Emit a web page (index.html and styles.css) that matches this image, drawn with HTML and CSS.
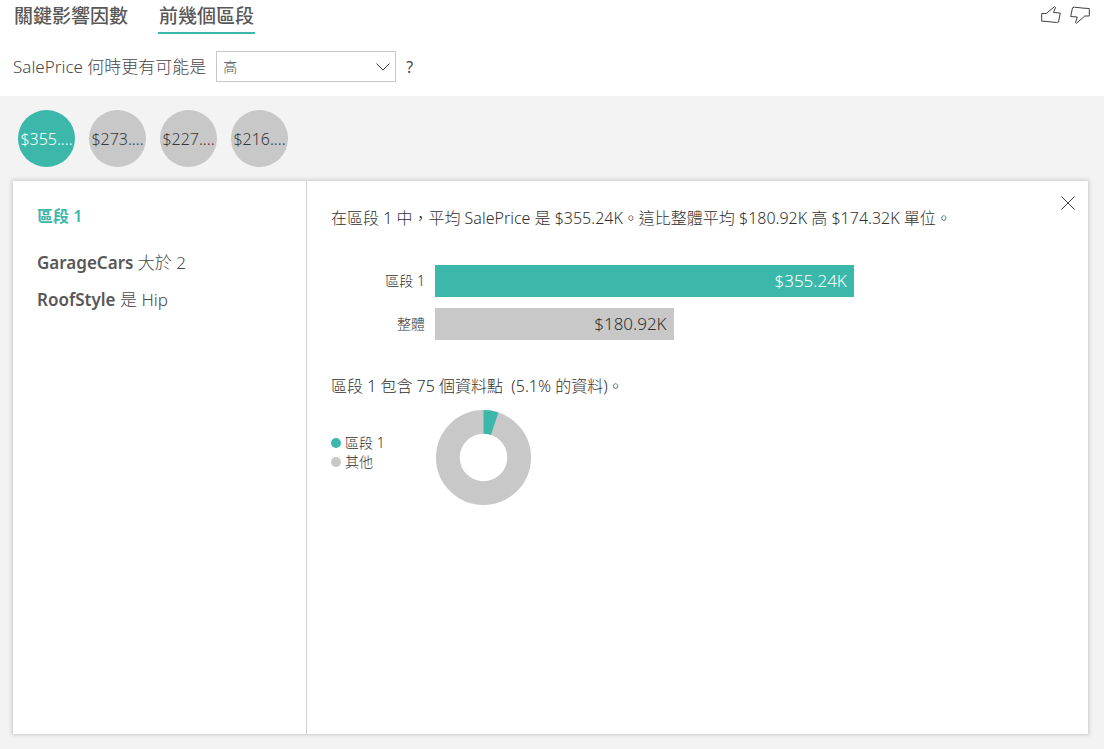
FILE: index.html
```html
<!DOCTYPE html>
<html lang="zh-Hant">
<head>
<meta charset="utf-8">
<meta name="viewport" content="width=device-width, initial-scale=1">
<title>前幾個區段</title>
<link rel="stylesheet" href="styles.css">
</head>
<body>
<div class="visual">
  <header class="header">
    <nav class="tabs">
      <button class="tab" type="button">關鍵影響因數</button>
      <button class="tab tab-active" type="button">前幾個區段</button>
    </nav>
    <div class="feedback">
      <button class="icon-button" type="button" aria-label="Like">
        <svg width="20" height="18" viewBox="0 0 20 18"><path d="M.7 7.5H5.200L13.500.7L14.500 1.500L12.500 6.500L19.300 7L17.500 16L15.500 16.500L6 15.500L.7 15.200Z"/></svg>
      </button>
      <button class="icon-button" type="button" aria-label="Dislike">
        <svg width="20" height="18" viewBox="0 0 20 18"><path d="M19.300 10H14.800L6.500 17.200L5.500 16.500L7.300 11L.7 10.500L2.500 1.800L4.500 1.200L14 2.200L19.300 2.500Z"/></svg>
      </button>
    </div>
  </header>
  <div class="question">
    <label for="level">SalePrice 何時更有可能是</label>
    <div class="select-box">
      <select id="level" class="select"><option>高</option></select>
      <svg class="chevron" width="14" height="8" viewBox="0 0 14 8"><path d="M.5.5L7 7L13.500.5"/></svg>
    </div>
    <span class="question-mark">?</span>
  </div>
  <main class="content">
    <div class="bubbles">
      <button class="bubble bubble-active" type="button">$355....</button>
      <button class="bubble" type="button">$273....</button>
      <button class="bubble" type="button">$227....</button>
      <button class="bubble" type="button">$216....</button>
    </div>
    <section class="card">
      <aside class="segment">
        <h2 class="segment-title">區段 1</h2>
        <p class="rule"><b>GarageCars</b> 大於 2</p>
        <p class="rule"><b>RoofStyle</b> 是 Hip</p>
      </aside>
      <div class="details">
        <div class="details-head">
          <p class="sentence">在區段 1 中，平均 SalePrice 是 $355.24K。這比整體平均 $180.92K 高 $174.32K 單位。</p>
          <button class="icon-button" type="button" aria-label="Close">
            <svg width="14" height="14" viewBox="0 0 14 14"><path d="M.5.5L13.500 13.500M13.500.5L.5 13.500"/></svg>
          </button>
        </div>
        <div class="bars">
          <span class="bar-label">區段 1</span>
          <div><div class="bar bar-segment" style="width:66.7%">$355.24K</div></div>
          <span class="bar-label">整體</span>
          <div><div class="bar" style="width:38%">$180.92K</div></div>
        </div>
        <p class="sentence">區段 1 包含 75 個資料點&nbsp; (5.1% 的資料)。</p>
        <div class="share">
          <ul class="legend">
            <li class="legend-item legend-segment">區段 1</li>
            <li class="legend-item">其他</li>
          </ul>
          <svg class="donut" width="95" height="95" viewBox="0 0 96 96">
            <circle class="donut-other" cx="48" cy="48" r="36"/>
            <circle class="donut-segment" cx="48" cy="48" r="36" pathLength="100" stroke-dasharray="5.1 94.9" transform="rotate(-90 48 48)"/>
          </svg>
        </div>
      </div>
    </section>
  </main>
</div>
</body>
</html>
```
FILE: styles.css
```css
* {
  box-sizing: border-box;
}

body {
  margin: 0;
  background: #fff;
  color: #484848;
  font: 300 16px/24px "Noto Sans", "Noto Sans CJK TC", sans-serif;
}

button,
select {
  font: inherit;
  color: inherit;
}

button {
  padding: 0;
  border: 0;
  background: none;
  cursor: pointer;
}

p,
h2,
ul {
  margin: 0;
  padding: 0;
}

.visual {
  display: flex;
  flex-direction: column;
  min-height: 100vh;
}

.header {
  display: flex;
  justify-content: space-between;
  align-items: flex-start;
  padding: 4px 14px 0 13px;
}

.tabs {
  display: flex;
  gap: 29px;
}

.tab {
  height: 30px;
  padding: 0 1px 4px;
  border-bottom: 2px solid transparent;
  color: #585858;
  font-size: 19px;
  font-weight: 500;
}

.tab-active {
  border-color: #3cb8ab;
}

.feedback {
  display: flex;
  gap: 9px;
  padding-top: 2px;
}

.icon-button {
  display: flex;
}

.icon-button svg,
.chevron {
  fill: none;
  stroke: #404040;
  stroke-width: 1;
}

.question {
  display: flex;
  align-items: center;
  padding: 17px 14px 14px 13px;
}

.question label {
  font-size: 17px;
}

.select-box {
  display: grid;
  align-items: center;
  width: 180px;
  margin: 0 10px;
}

.select {
  grid-area: 1 / 1;
  height: 31px;
  padding: 0 6px;
  border: 1px solid #c8c8c8;
  border-radius: 0;
  background: #fff;
  appearance: none;
  font-size: 14px;
}

.chevron {
  grid-area: 1 / 1;
  justify-self: end;
  margin-right: 6px;
  pointer-events: none;
}

.question-mark {
  font-weight: 400;
}

.content {
  display: flex;
  flex: 1;
  flex-direction: column;
  gap: 14px;
  padding: 14px 16px 15px 13px;
  background: #f3f3f3;
}

.bubbles {
  display: flex;
  gap: 14px;
  padding-left: 5px;
}

.bubble {
  width: 57px;
  height: 57px;
  border-radius: 50%;
  background: #c8c8c8;
  color: #383838;
}

.bubble-active {
  background: #3cb8ab;
  color: #fff;
}

.card {
  display: flex;
  flex: 1;
  background: #fff;
  box-shadow: 0 0 4px 1px #c8c8c8;
}

.segment {
  width: 294px;
  padding: 23px 24px;
  border-right: 1px solid #d0d0d0;
}

.segment-title {
  margin-bottom: 23px;
  color: #3cb8ab;
  font-size: 16px;
  font-weight: 600;
}

.rule {
  margin-bottom: 13px;
  font-size: 17px;
}

.rule b {
  color: #585858;
  font-weight: 600;
}

.details {
  flex: 1;
  padding: 15px 13px 24px 24px;
  color: #303030;
}

.details-head {
  display: flex;
  justify-content: space-between;
  align-items: flex-start;
}

.details-head .sentence {
  padding-top: 10px;
}

.bars {
  display: grid;
  grid-template-columns: 94px 1fr;
  gap: 11px 10px;
  align-items: center;
  padding: 35px 12px 34px 0;
}

.bar-label {
  font-size: 14px;
  text-align: right;
}

.bar {
  padding: 0 7px;
  background: #c8c8c8;
  font-size: 17px;
  line-height: 32px;
  text-align: right;
}

.bar-segment {
  background: #3cb8ab;
  color: #fff;
}

.share {
  display: flex;
  align-items: flex-start;
  gap: 51px;
  padding-top: 12px;
}

.legend {
  padding-top: 23px;
  font-size: 14px;
  line-height: 19px;
  list-style: none;
}

.legend-item {
  display: flex;
  align-items: center;
  gap: 4px;
}

.legend-item::before {
  content: "";
  width: 10px;
  height: 10px;
  border-radius: 50%;
  background: #c8c8c8;
}

.legend-segment::before {
  background: #3cb8ab;
}

.donut circle {
  fill: none;
  stroke-width: 24;
}

.donut .donut-other {
  stroke: #c8c8c8;
}

.donut .donut-segment {
  stroke: #3cb8ab;
}
```
